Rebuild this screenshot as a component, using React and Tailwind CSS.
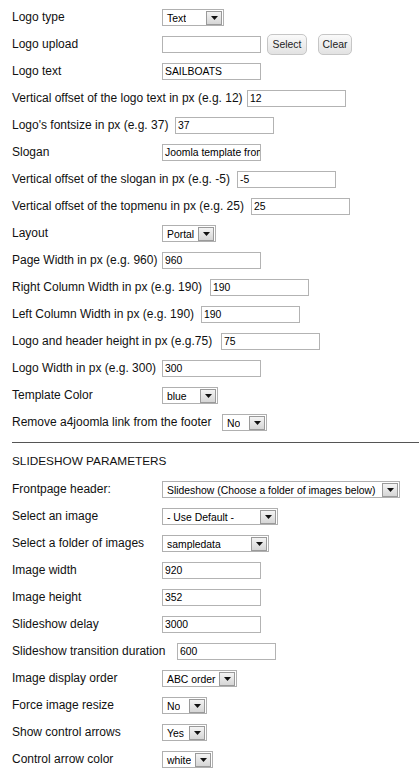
import React from "react";

const FONT = { fontFamily: '"Liberation Sans", Arial, sans-serif' };

const TextBox = ({ value, width = "w-[99px]" }) => (
  <div
    className={`${width} h-[17px] shrink-0 border border-[#b3b3b3] bg-white pl-[2px] pt-[1px] text-[10.4px] leading-[14px] text-black whitespace-nowrap overflow-hidden`}
  >
    {value}
  </div>
);

const Arrow = () => (
  <div className="ml-auto mr-px h-[14px] w-[16px] shrink-0 border border-[#9a9a9a] bg-gradient-to-b from-[#f4f4f4] to-[#d6d6d6] flex items-center justify-center">
    <svg width="7" height="4" viewBox="0 0 7 4">
      <path d="M0 0h7L3.5 4z" fill="#111" />
    </svg>
  </div>
);

const SelectBox = ({ value, width }) => (
  <div
    className={`${width} h-[17px] shrink-0 border border-[#b0b0b0] bg-white flex items-center text-[10.4px] text-black whitespace-nowrap`}
  >
    <span className="pl-[4px] pt-[2px] overflow-hidden">{value}</span>
    <Arrow />
  </div>
);

const Btn = ({ children, width }) => (
  <div
    className={`${width} h-[21px] shrink-0 rounded-[5px] border border-[#c6c6c6] bg-gradient-to-b from-[#fafafa] to-[#e2e2e2] flex items-center justify-center text-[10.4px] text-[#222]`}
  >
    {children}
  </div>
);

// labelW: where the control starts (minus the 12px page padding)
const Row = ({ label, labelW = "w-[150px]", children }) => (
  <div className="flex items-center h-[27px]">
    <span
      className={`${labelW} shrink-0 text-[12px] text-[#111] whitespace-nowrap -translate-y-px`}
    >
      {label}
    </span>
    {children}
  </div>
);

const TOP_ROWS = [
  ["Logo type", <SelectBox value="Text" width="w-[62px]" />],
  [
    "Logo upload",
    <div className="flex items-center">
      <TextBox value="" />
      <div className="ml-[6px]">
        <Btn width="w-[40px]">Select</Btn>
      </div>
      <div className="ml-[11px]">
        <Btn width="w-[34px]">Clear</Btn>
      </div>
    </div>,
  ],
  ["Logo text", <TextBox value="SAILBOATS" />],
  [
    "Vertical offset of the logo text in px (e.g. 12)",
    <TextBox value="12" />,
    "w-[235px]",
  ],
  ["Logo's fontsize in px (e.g. 37)", <TextBox value="37" />, "w-[163px]"],
  ["Slogan", <TextBox value="Joomla template from a4joomla" />],
  [
    "Vertical offset of the slogan in px (e.g. -5)",
    <TextBox value="-5" />,
    "w-[225px]",
  ],
  [
    "Vertical offset of the topmenu in px (e.g. 25)",
    <TextBox value="25" />,
    "w-[239px]",
  ],
  ["Layout", <SelectBox value="Portal" width="w-[54px]" />],
  ["Page Width in px (e.g. 960)", <TextBox value="960" />],
  ["Right Column Width in px (e.g. 190)", <TextBox value="190" />, "w-[198px]"],
  ["Left Column Width in px (e.g. 190)", <TextBox value="190" />, "w-[189px]"],
  ["Logo and header height in px (e.g.75)", <TextBox value="75" />, "w-[209px]"],
  ["Logo Width in px (e.g. 300)", <TextBox value="300" />],
  ["Template Color", <SelectBox value="blue" width="w-[56px]" />],
  [
    "Remove a4joomla link from the footer",
    <SelectBox value="No" width="w-[45px]" />,
    "w-[210px]",
  ],
];

const SLIDE_ROWS = [
  [
    "Frontpage header:",
    <SelectBox value="Slideshow (Choose a folder of images below)" width="w-[238px]" />,
  ],
  ["Select an image", <SelectBox value="- Use Default -" width="w-[116px]" />],
  ["Select a folder of images", <SelectBox value="sampledata" width="w-[107px]" />],
  ["Image width", <TextBox value="920" />],
  ["Image height", <TextBox value="352" />],
  ["Slideshow delay", <TextBox value="3000" />],
  ["Slideshow transition duration", <TextBox value="600" />, "w-[165px]"],
  ["Image display order", <SelectBox value="ABC order" width="w-[75px]" />],
  ["Force image resize", <SelectBox value="No" width="w-[45px]" />],
  ["Show control arrows", <SelectBox value="Yes" width="w-[45px]" />],
  ["Control arrow color", <SelectBox value="white" width="w-[51px]" />],
];

export default function App() {
  return (
    <div className="w-[419px] min-h-[781px] bg-white pt-[4px]" style={FONT}>
      <div className="pl-[12px]">
        {TOP_ROWS.map(([label, control, labelW]) => (
          <Row key={label} label={label} labelW={labelW}>
            {control}
          </Row>
        ))}
      </div>

      <div className="ml-[12px] mt-[6px] mb-[6px] h-px bg-[#555]" />

      <div className="pl-[12px]">
        <div className="flex items-center h-[27px] text-[11.8px] text-[#111] -translate-y-px">
          SLIDESHOW PARAMETERS
        </div>
        {SLIDE_ROWS.map(([label, control, labelW]) => (
          <Row key={label} label={label} labelW={labelW}>
            {control}
          </Row>
        ))}
      </div>
    </div>
  );
}
